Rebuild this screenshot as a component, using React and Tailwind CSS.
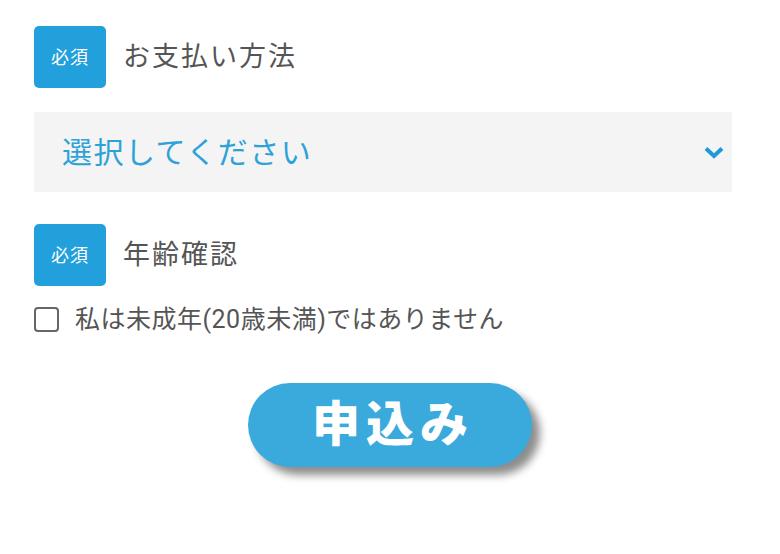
import React from "react";

const font = { fontFamily: 'Roboto, "Noto Sans CJK JP", sans-serif' };

function Badge() {
  return (
    <div className="flex h-[62px] w-[72px] shrink-0 items-center justify-center rounded-[5px] bg-[#22a0dc] text-[18px] tracking-[1px] text-white">
      必須
    </div>
  );
}

export default function App() {
  return (
    <div className="h-[554px] w-[780px] bg-white pl-[34px] pr-[48px] pt-[26px]" style={font}>
      <div className="flex items-center gap-[17px]">
        <Badge />
        <span className="text-[27px] tracking-[2px] text-[#555]">お支払い方法</span>
      </div>
      <div className="mt-[24px] flex h-[80px] items-center justify-between bg-[#f4f4f4] pl-[28px] pr-[7px]">
        <span className="text-[30px] tracking-[1.5px] text-[#2ea2d8]">選択してください</span>
        <svg width="22" height="14" viewBox="0 0 22 14">
          <path d="M3 3.5 L11 11 L19 3.5" fill="none" stroke="#1f9ad6" strokeWidth="4" />
        </svg>
      </div>
      <div className="mt-[32px] flex items-center gap-[17px]">
        <Badge />
        <span className="text-[27px] tracking-[2px] text-[#555]">年齢確認</span>
      </div>
      <label className="mt-[15px] flex items-center gap-[16px]">
        <span className="h-[25px] w-[25px] rounded-[4px] border-2 border-[#666]" />
        <span className="text-[25px] tracking-[0.5px] text-[#555]">私は未成年(20歳未満)ではありません</span>
      </label>
      <div className="ml-[-34px] mt-[44px] flex w-[780px] justify-center">
        <button className="flex h-[84px] w-[284px] items-center justify-center rounded-full bg-[#3aaadd] pl-[6px] text-[48px] font-black tracking-[6px] text-white shadow-[8px_8px_8px_rgba(0,0,0,0.45)]">
          申込み
        </button>
      </div>
    </div>
  );
}
